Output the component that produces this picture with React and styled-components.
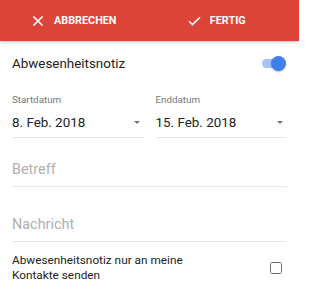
import styled, { createGlobalStyle } from "styled-components";

const GlobalStyle = createGlobalStyle`
  html, body { margin: 0; padding: 0; background: #fff; }
  body { font-family: Roboto, "Noto Sans", sans-serif; }
`;

const Page = styled.div`
  width: 299px;
  height: 300px;
  overflow: hidden;
  background: #fff;
`;

const Toolbar = styled.div`
  height: 41px;
  background: #db4437;
  display: grid;
  grid-template-columns: 1fr 1fr;
  box-shadow: 0 1px 3px rgba(0, 0, 0, 0.25);
  position: relative;
  z-index: 1;
`;

const ToolbarButton = styled.div`
  display: flex;
  align-items: center;
  justify-content: center;
  gap: ${(p) => p.$gap}px;
  color: #fff;
  font-size: 10.8px;
  font-weight: 700;
  padding-left: ${(p) => p.$left || 0}px;
  padding-right: ${(p) => p.$right || 0}px;
  svg { flex: none; }
`;

const Body = styled.div`
  padding: 0 12px;
`;

const ToggleRow = styled.div`
  display: flex;
  align-items: center;
  justify-content: space-between;
  height: 43px;
  margin-top: 1px;
  font-size: 13.4px;
  color: #222;
`;

const Toggle = styled.div`
  position: relative;
  width: 20px;
  height: 9px;
  border-radius: 5px;
  background: #a6c4f7;
  margin-right: 5px;
  &::after {
    content: "";
    position: absolute;
    right: -4px;
    top: -3px;
    width: 15px;
    height: 15px;
    border-radius: 50%;
    background: #3f7fe9;
    box-shadow: 0 1px 2px rgba(0, 0, 0, 0.25);
  }
`;

const DateRow = styled.div`
  display: grid;
  grid-template-columns: 1fr 1fr;
  gap: 12px;
  margin-top: 8px;
`;

const DateField = styled.div`
  display: flex;
  flex-direction: column;
`;

const FieldLabel = styled.div`
  font-size: 9.8px;
  color: #777;
  height: 14px;
  line-height: 14px;
`;

const Select = styled.div`
  display: flex;
  align-items: center;
  justify-content: space-between;
  height: 30px;
  font-size: 13.4px;
  color: #222;
  border-bottom: 1px solid #e6e6e6;
  padding-right: 4px;
`;

const Caret = styled.span`
  width: 0;
  height: 0;
  border-left: 3.5px solid transparent;
  border-right: 3.5px solid transparent;
  border-top: 3.5px solid #777;
`;

const TextField = styled.div`
  height: 33px;
  margin-top: ${(p) => p.$top}px;
  display: flex;
  align-items: center;
  font-size: 14.4px;
  color: #b0b0b0;
  border-bottom: 1px solid #e6e6e6;
`;

const CheckRow = styled.div`
  display: flex;
  align-items: center;
  justify-content: space-between;
  margin-top: 11px;
  font-size: 11.8px;
  line-height: 15px;
  color: #222;
`;

const Checkbox = styled.div`
  width: 10px;
  height: 10px;
  border: 1.6px solid #6f6f6f;
  border-radius: 1.5px;
  margin-right: 5px;
`;

export default function App() {
  return (
    <>
      <GlobalStyle />
      <Page>
        <Toolbar>
          <ToolbarButton $gap={11} $left={0}>
            <svg width="10" height="10" viewBox="0 0 10 10">
              <path d="M1 1L9 9M9 1L1 9" stroke="#fff" strokeWidth="1.6" strokeLinecap="square" />
            </svg>
            ABBRECHEN
          </ToolbarButton>
          <ToolbarButton $gap={9} $right={15}>
            <svg width="13" height="10" viewBox="0 0 13 10">
              <path d="M1 5.2L4.5 8.6L12 1.2" stroke="#fff" strokeWidth="1.6" fill="none" />
            </svg>
            FERTIG
          </ToolbarButton>
        </Toolbar>
        <Body>
          <ToggleRow>
            Abwesenheitsnotiz
            <Toggle />
          </ToggleRow>
          <DateRow>
            <DateField>
              <FieldLabel>Startdatum</FieldLabel>
              <Select>
                8. Feb. 2018
                <Caret />
              </Select>
            </DateField>
            <DateField>
              <FieldLabel>Enddatum</FieldLabel>
              <Select>
                15. Feb. 2018
                <Caret />
              </Select>
            </DateField>
          </DateRow>
          <TextField $top={15}>Betreff</TextField>
          <TextField $top={21}>Nachricht</TextField>
          <CheckRow>
            <div>
              Abwesenheitsnotiz nur an meine
              <br />
              Kontakte senden
            </div>
            <Checkbox />
          </CheckRow>
        </Body>
      </Page>
    </>
  );
}
